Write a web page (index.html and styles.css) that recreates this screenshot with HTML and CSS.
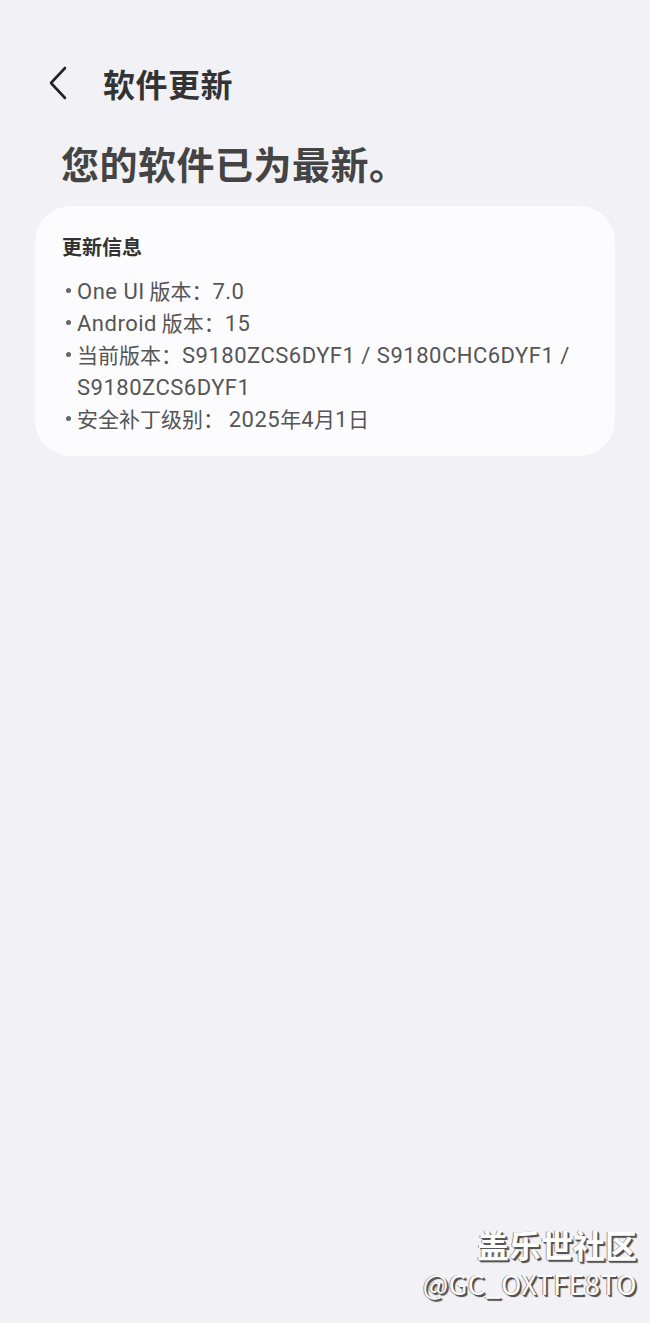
FILE: index.html
```html
<!DOCTYPE html>
<html lang="zh-CN">
<head>
  <meta charset="UTF-8" />
  <meta name="viewport" content="width=device-width, initial-scale=1.0" />
  <title>软件更新</title>
  <link rel="stylesheet" href="styles.css">
</head>
<body>
  <div class="page">
    <header class="topbar">
      <button class="back" aria-label="返回">
        <svg width="20" height="34" viewBox="0 0 20 34"><path d="M17 2 L3 17 L17 32" fill="none" stroke="#222" stroke-width="2.6" stroke-linecap="round" stroke-linejoin="round"/></svg>
      </button>
      <h1 class="title">软件更新</h1>
    </header>

    <h2 class="status">您的软件已为最新。</h2>

    <section class="card">
      <h3 class="card-title">更新信息</h3>
      <ul class="info">
        <li><span class="latin">One UI</span> 版本：<span class="latin">7.0</span></li>
        <li><span class="latin">Android</span> 版本：<span class="latin">15</span></li>
        <li>当前版本：<span class="latin nowrap">S9180ZCS6DYF1 / S9180CHC6DYF1 /</span> <span class="latin">S9180ZCS6DYF1</span></li>
        <li>安全补丁级别： <span class="latin">2025</span>年<span class="latin">4</span>月<span class="latin">1</span>日</li>
      </ul>
    </section>

    <div class="watermark">
      <div class="wm-name">盖乐世社区</div>
      <div class="wm-user">@GC_OXTFE8TO</div>
    </div>
  </div>
</body>
</html>
```

FILE: styles.css
```css
html, body { margin: 0; padding: 0; }
body {
  background: #f2f2f6;
  font-family: "Noto Sans CJK SC", "Noto Sans", sans-serif;
  color: #333;
}
.page {
  width: 650px;
  height: 1323px;
  display: flex;
  flex-direction: column;
  box-sizing: border-box;
  padding-top: 60px;
}
.topbar {
  display: flex;
  align-items: center;
  height: 46px;
  padding-left: 48px;
}
.back {
  background: none;
  border: none;
  padding: 0;
  width: 22px;
  height: 34px;
  display: flex;
  align-items: center;
  cursor: pointer;
}
.title {
  margin: 0 0 0 33px;
  font-size: 32px;
  font-weight: 700;
  color: #333;
  letter-spacing: 0.5px;
}
.status {
  margin: 30px 0 0 61px;
  font-size: 38px;
  font-weight: 700;
  color: #444;
  line-height: 54px;
  letter-spacing: 0.5px;
}
.card {
  margin: 16px 35px 0 35px;
  background: #fcfcfe;
  border-radius: 36px;
  padding: 24px 27px 22px 27px;
}
.card-title {
  margin: 0;
  font-size: 20px;
  font-weight: 700;
  color: #333;
  line-height: 34px;
}
.info {
  list-style: none;
  margin: 10px 0 0 0;
  padding: 0 0 0 15px;
  font-size: 21px;
  color: #555;
  line-height: 32px;
}
.info li { position: relative; padding-right: 10px; }
.info .latin {
  font-family: Roboto, sans-serif;
  font-size: 22px;
  line-height: 1;
  letter-spacing: 0.5px;
}
.info .nowrap { white-space: nowrap; }
.info li::before {
  content: "";
  position: absolute;
  left: -11px;
  top: 14px;
  width: 5px;
  height: 5px;
  border-radius: 50%;
  background: #666;
}
.watermark {
  margin-top: auto;
  margin-bottom: 20px;
  padding-right: 13px;
  display: flex;
  flex-direction: column;
  align-items: flex-end;
  color: #fff;
  text-shadow: 1px 1px 0 #555, -1px 0 0 #999, 2px 2px 1px #444;
}
.wm-name {
  font-size: 32px;
  font-weight: 700;
  line-height: 42px;
}
.wm-user {
  font-size: 27px;
  line-height: 38px;
  letter-spacing: 0.5px;
}
```
